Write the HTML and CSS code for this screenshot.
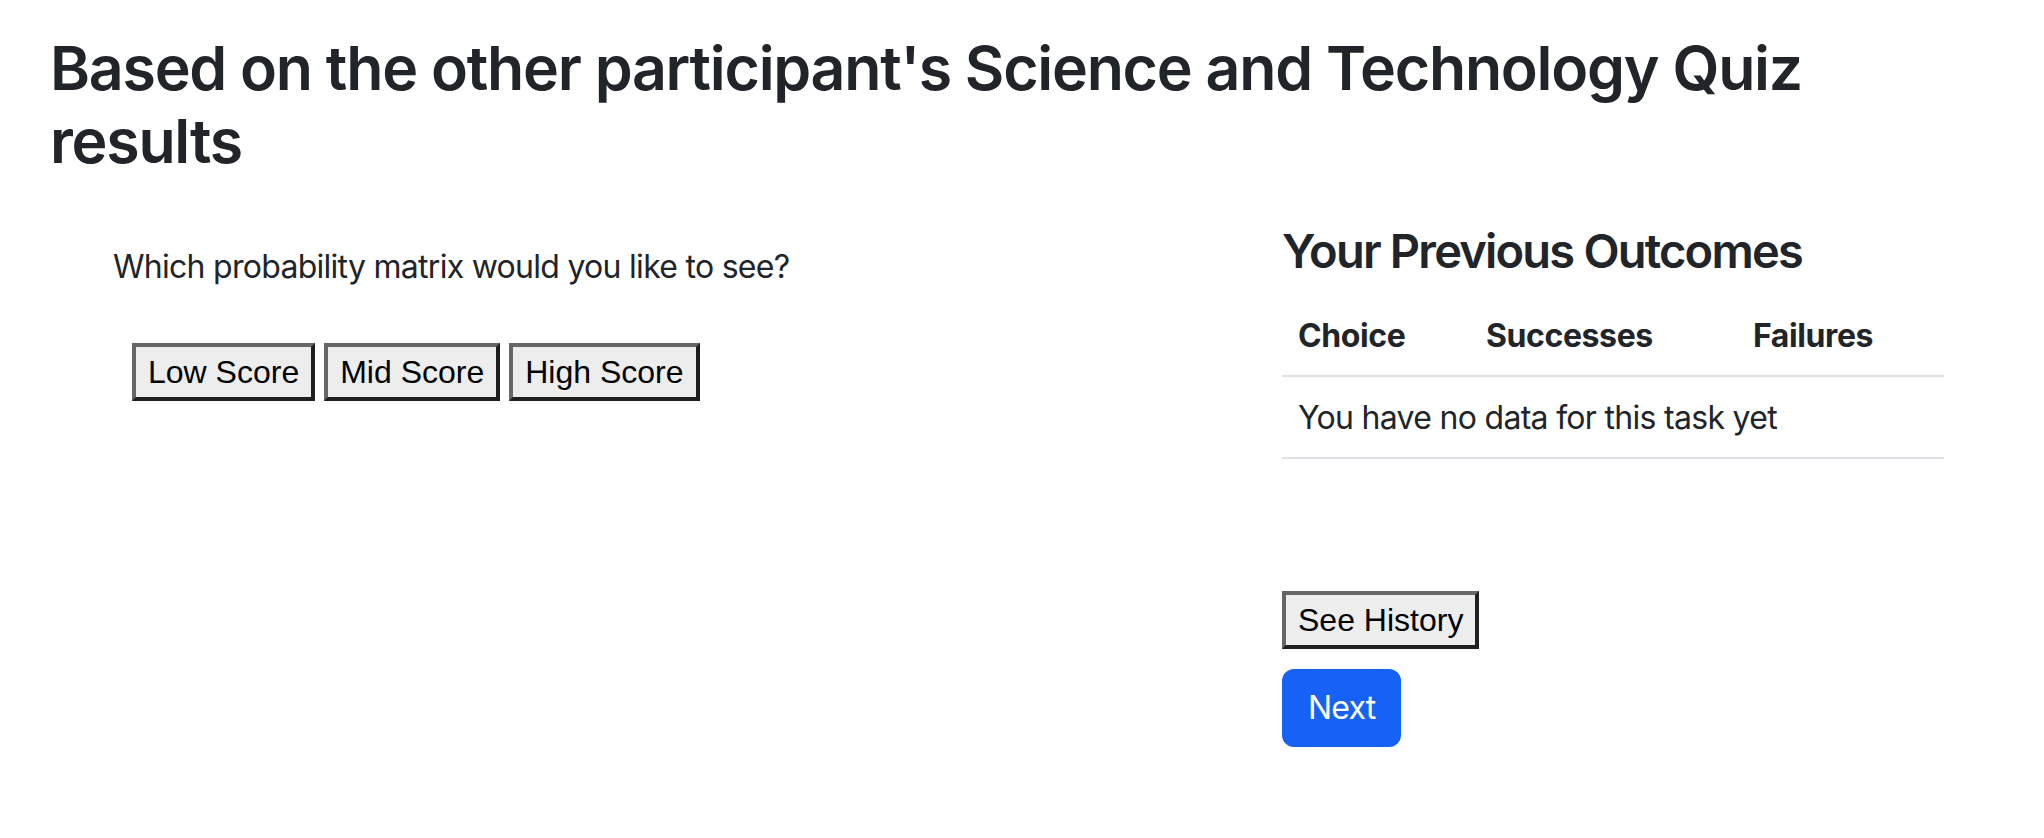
FILE: index.html
```html
<!DOCTYPE html>
<html lang="en">
<head>
<meta charset="utf-8">
<title>Science and Technology Quiz</title>
<link rel="stylesheet" href="styles.css">
</head>
<body>
<div class="page">
  <h2 class="title">Based on the other participant's Science and Technology Quiz results</h2>
  <div class="main">
    <section class="left">
      <p class="question">Which probability matrix would you like to see?</p>
      <div class="choices">
        <button class="legacy-btn">Low Score</button>
        <button class="legacy-btn">Mid Score</button>
        <button class="legacy-btn">High Score</button>
      </div>
    </section>
    <section class="right">
      <h4 class="outcomes-title">Your Previous Outcomes</h4>
      <table class="outcomes">
        <colgroup>
          <col class="col-choice">
          <col class="col-success">
          <col class="col-fail">
        </colgroup>
        <thead>
          <tr><th>Choice</th><th>Successes</th><th>Failures</th></tr>
        </thead>
        <tbody>
          <tr><td colspan="3">You have no data for this task yet</td></tr>
        </tbody>
      </table>
      <div class="actions">
        <button class="legacy-btn">See History</button>
        <button class="primary-btn">Next</button>
      </div>
    </section>
  </div>
</div>
</body>
</html>
```

FILE: styles.css
```css
html, body {
  margin: 0;
  padding: 0;
  background: #ffffff;
}

body {
  font-family: Inter, "Noto Sans", "Liberation Sans", sans-serif;
  font-size: 32px;
  line-height: 48px;
  color: #212529;
}

.page {
  padding: 32px 50px 0 50px;
}

.title {
  margin: 0 0 16px 0;
  font-size: 60.8px;
  line-height: 73px;
  font-weight: 600;
  letter-spacing: -1.25px;
}

.main {
  display: grid;
  grid-template-columns: 1232px 662px;
}

.left {
  padding-top: 49px;
}

.question {
  margin: 0 0 32px 0;
  padding-left: 63px;
  letter-spacing: -0.72px;
}

.choices {
  display: flex;
  gap: 9px;
  padding-top: 20px;
  padding-left: 82px;
}

.legacy-btn {
  font-family: "Liberation Sans", Arial, sans-serif;
  font-size: 32px;
  line-height: 46px;
  color: #000000;
  background: #ededed;
  border-width: 4px;
  border-style: solid;
  border-color: #666666 #1f1f1f #1f1f1f #666666;
  border-radius: 0;
  padding: 2px 12px;
  margin: 0;
}

.right {
  padding-top: 29px;
}

.outcomes-title {
  margin: 0 0 16px 0;
  font-size: 47px;
  line-height: 56.4px;
  font-weight: 600;
  letter-spacing: -1.8px;
}

.outcomes {
  width: 662px;
  border-collapse: collapse;
  margin-bottom: 32px;
  table-layout: fixed;
}

.col-choice { width: 188px; }
.col-success { width: 267px; }
.col-fail { width: 207px; }

.outcomes th,
.outcomes td {
  padding: 17px 16px 15px 16px;
  text-align: left;
  border-bottom: 2px solid #dee2e6;
  line-height: 48px;
}

.outcomes th {
  font-weight: 700;
  letter-spacing: -0.4px;
}

.outcomes td {
  letter-spacing: -0.7px;
}

.actions {
  display: flex;
  flex-direction: column;
  align-items: flex-start;
  gap: 20px;
  padding-top: 100px;
}

.primary-btn {
  font-family: Inter, "Noto Sans", "Liberation Sans", sans-serif;
  font-size: 32px;
  line-height: 48px;
  letter-spacing: -0.8px;
  color: #ffffff;
  background: #1662f6;
  border: 2px solid #1662f6;
  border-radius: 12px;
  padding: 13px 24px;
  margin: 0;
}
```
